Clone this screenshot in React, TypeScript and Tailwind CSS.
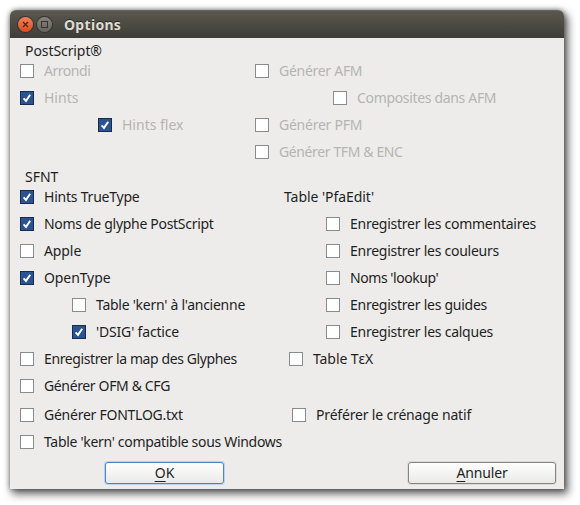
import type { ReactNode } from "react";
import clsx from "clsx";

type OptionProps = {
  label: string;
  checked?: boolean;
  disabled?: boolean;
  className?: string;
};

function CheckBox({ checked }: { checked?: boolean }) {
  return (
    <span
      className={clsx(
        "flex size-[14px] shrink-0 items-center justify-center border",
        checked ? "border-[#182b4d] bg-[#2a5391]" : "border-[#888c8f] bg-white",
      )}
    >
      {checked && (
        <svg viewBox="0 0 12 12" className="size-3" fill="none" stroke="#fff" strokeWidth="1.9">
          <path d="M2.6 6.3 5 8.9 9.2 2.8" />
        </svg>
      )}
    </span>
  );
}

function Option({ label, checked, disabled, className }: OptionProps) {
  return (
    <label className={clsx("flex items-center gap-2.5 whitespace-nowrap", disabled && "text-[#b5b4b2]", className)}>
      <CheckBox checked={checked} />
      <span>{label}</span>
    </label>
  );
}

function Row({ children, className = "h-[27px] grid-cols-[235px_1fr]" }: { children: ReactNode; className?: string }) {
  return <div className={clsx("grid items-center", className)}>{children}</div>;
}

const sfntRow = "h-[27px] grid-cols-[264px_1fr]";

export default function App() {
  return (
    <div className="h-[505px] w-[580px] bg-white pt-[10px] pl-[10px] font-['Noto_Sans','Liberation_Sans',sans-serif] text-[14px] leading-[20px] text-[#1f1f1f]">
      <main className="flex h-[479px] w-[554px] flex-col overflow-hidden rounded-t-[6px] bg-[#edecea] shadow-[3px_4px_8px_1px_rgba(0,0,0,0.6),0_0_5px_rgba(0,0,0,0.45)]">
        <header className="flex h-7 shrink-0 items-center border-t border-[#686659] bg-linear-to-b from-[#5a584e] to-[#3e3d38] pl-2">
          <span className="flex size-[15px] items-center justify-center rounded-full bg-linear-to-b from-[#f47f57] to-[#df4a1a] ring-1 ring-[#34332e]">
            <svg viewBox="0 0 15 15" className="size-[15px]" fill="none" stroke="#4a2518" strokeWidth="1.3">
              <path d="M5 5 10 10M10 5 5 10" />
            </svg>
          </span>
          <span className="ml-1 flex size-[15px] items-center justify-center rounded-full bg-linear-to-b from-[#85837a] to-[#66645c] ring-1 ring-[#34332e]">
            <span className="size-[7px] border border-[#35342f]" />
          </span>
          <h1 className="ml-3 font-bold tracking-[0.3px] text-[#dfdbd2] [text-shadow:0_-1px_0_#292824]">Options</h1>
        </header>

        <div className="pl-2.5">
          <h2 className="h-[19.5px] pt-[3px] pl-[5px] leading-[19px] tracking-[-0.08px]">PostScript®</h2>
          <Row>
            <Option label="Arrondi" disabled className="tracking-[-0.47px]" />
            <Option label="Générer AFM" disabled className="tracking-[-0.28px]" />
          </Row>
          <Row>
            <Option label="Hints" checked disabled />
            <Option label="Composites dans AFM" disabled className="ml-[78px] tracking-[-0.33px]" />
          </Row>
          <Row>
            <Option label="Hints flex" checked disabled className="ml-[78px]" />
            <Option label="Générer PFM" disabled className="tracking-[-0.24px]" />
          </Row>
          <Row>
            <span />
            <Option label="Générer TFM & ENC" disabled className="tracking-[-0.38px]" />
          </Row>

          <h2 className="h-[18px] pt-px pl-[5px] leading-[20px]">SFNT</h2>
          <Row className={sfntRow}>
            <Option label="Hints TrueType" checked className="tracking-[-0.22px]" />
            <span className="tracking-[-0.06px]">Table 'PfaEdit'</span>
          </Row>
          <Row className={sfntRow}>
            <Option label="Noms de glyphe PostScript" checked className="tracking-[-0.3px]" />
            <Option label="Enregistrer les commentaires" className="ml-[42px] tracking-[-0.25px]" />
          </Row>
          <Row className={sfntRow}>
            <Option label="Apple" className="tracking-[-0.1px]" />
            <Option label="Enregistrer les couleurs" className="ml-[42px] tracking-[-0.25px]" />
          </Row>
          <Row className={sfntRow}>
            <Option label="OpenType" checked className="tracking-[-0.1px]" />
            <Option label="Noms 'lookup'" className="ml-[42px] tracking-[-0.44px]" />
          </Row>
          <Row className={sfntRow}>
            <Option label="Table 'kern' à l'ancienne" className="ml-[52px] tracking-[-0.26px]" />
            <Option label="Enregistrer les guides" className="ml-[42px] tracking-[-0.25px]" />
          </Row>
          <Row className={sfntRow}>
            <Option label="'DSIG' factice" checked className="ml-[52px] tracking-[-0.17px]" />
            <Option label="Enregistrer les calques" className="ml-[42px] tracking-[-0.24px]" />
          </Row>
          <Row className={sfntRow}>
            <Option label="Enregistrer la map des Glyphes" className="tracking-[-0.39px]" />
            <Option label="Table TεX" className="ml-[5px] tracking-[-0.08px]" />
          </Row>
          <Row className={sfntRow}>
            <Option label="Générer OFM & CFG" className="tracking-[-0.36px]" />
          </Row>
          <Row className="mt-[2px] h-[27px] grid-cols-[272px_1fr]">
            <Option label="Générer FONTLOG.txt" className="tracking-[-0.25px]" />
            <Option label="Préférer le crénage natif" className="tracking-[-0.17px]" />
          </Row>
          <Row className={sfntRow}>
            <Option label="Table 'kern' compatible sous Windows" className="tracking-[-0.31px]" />
          </Row>
        </div>

        <footer className="mt-[6px] flex justify-between pr-2 pl-[95px]">
          <button className="flex h-[22px] w-[119px] items-center justify-center rounded-[3px] border border-[#4d84c4] bg-linear-to-b from-white to-[#e9e9e7] ring-1 ring-[#b9d2ee]">
            <span>
              <u className="underline-offset-[3px]">O</u>K
            </span>
          </button>
          <button className="flex h-[22px] w-[148px] items-center justify-center rounded-[3px] border border-[#848484] bg-linear-to-b from-white to-[#e9e9e7] tracking-[-0.17px] ring-1 ring-[#dcdbd9]">
            <span>
              <u className="underline-offset-[3px]">A</u>nnuler
            </span>
          </button>
        </footer>
      </main>
    </div>
  );
}
